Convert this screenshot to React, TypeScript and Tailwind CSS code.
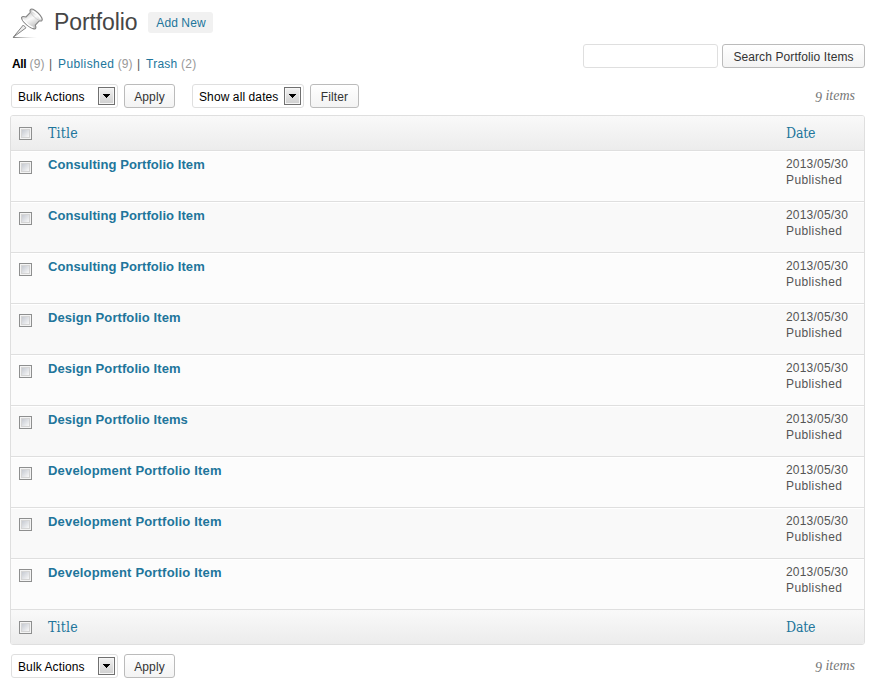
import React from "react";

const items = [
  "Consulting Portfolio Item",
  "Consulting Portfolio Item",
  "Consulting Portfolio Item",
  "Design Portfolio Item",
  "Design Portfolio Item",
  "Design Portfolio Items",
  "Development Portfolio Item",
  "Development Portfolio Item",
  "Development Portfolio Item",
];

function PinIcon() {
  return (
    <svg className="mt-[7px] ml-3 h-8 w-8 shrink-0" viewBox="0 0 32 32" fill="none">
      <defs>
        <linearGradient id="pin" x1="14" y1="7" x2="21" y2="21" gradientUnits="userSpaceOnUse">
          <stop stopColor="#d0d0d0" />
          <stop offset=".4" stopColor="#fafafa" />
          <stop offset="1" stopColor="#c2c2c2" />
        </linearGradient>
        <linearGradient id="shade" x1="1" y1="0" x2="25" y2="0" gradientUnits="userSpaceOnUse">
          <stop stopColor="#777" />
          <stop offset="1" stopColor="#ccc" stopOpacity="0" />
        </linearGradient>
      </defs>
      <path d="M1 30h24v1H1z" fill="url(#shade)" />
      <path d="M11.300 18 1.300 30.200 14 20.800z" fill="#ececec" stroke="#858585" strokeWidth="1" />
      <path
        d="M18.400 5.300C17.200 3 18.600 1.300 21 2.300c3 1.400 7.400 5.600 8.900 8.700 1 2.200-.2 3.600-2.400 2.700l-4.200 4.500c1.200 2.500.6 4.200-1.500 3.700-4.100-1-10.800-6.500-12.100-10-.8-2.200 1-3 4.200-1.900z"
        fill="url(#pin)"
        stroke="#858585"
        strokeWidth="1.100"
        strokeLinejoin="round"
      />
      <path d="M18.700 5.500c1.700 3.200 5.200 6.500 8.600 8" stroke="#c5c5c5" strokeWidth=".8" />
      <path d="M11 12.300c2.200 3.100 6.300 6.500 10.400 8.300M20.400 3.800c3.200 1.500 6.700 4.900 8.100 7.900" stroke="#fff" strokeWidth="1.300" />
    </svg>
  );
}

function Checkbox() {
  return (
    <span className="block h-[13px] w-[13px] border border-[#8e8f8f] bg-[#f4f4f4] p-px">
      <span className="block h-[9px] w-[9px] border border-[#d5d5d5] bg-linear-to-br from-[#c6cad2] to-[#f8f8f8]" />
    </span>
  );
}

function Select({ label, className }: { label: string; className: string }) {
  return (
    <div className={`flex h-6 items-center justify-between rounded-[3px] border border-[#dfdfdf] bg-white pr-[2px] pl-[6px] text-black ${className}`}>
      <span className="pt-[2px] whitespace-nowrap">{label}</span>
      <span className="flex h-[18px] w-[17px] items-center justify-center border border-[#707070] bg-linear-to-b from-[#f2f2f2] to-[#cfcfcf] shadow-[inset_0_0_0_1px_#f6f6f6]">
        <svg className="h-1 w-[7px]" viewBox="0 0 7 4" shapeRendering="crispEdges">
          <path d="M0 0h7v1H6v1H5v1H4v1H3V3H2V2H1V1H0z" fill="#000" />
        </svg>
      </span>
    </div>
  );
}

function Button({ label, className }: { label: string; className: string }) {
  return (
    <button className={`flex h-6 items-center justify-center rounded-[3px] border border-[#bbb] bg-linear-to-b from-white to-[#f3f3f3] pt-[2px] whitespace-nowrap ${className}`}>
      {label}
    </button>
  );
}

function Count() {
  return (
    <span className="pr-[10px] font-['Liberation_Serif',serif] text-[14px] tracking-normal text-[#777] italic">
      <span className="relative top-[2px]">9</span> items
    </span>
  );
}

function HeadRow({ className }: { className: string }) {
  return (
    <div className={`flex items-center bg-linear-to-b from-[#f9f9f9] to-[#ececec] pl-2 font-['DejaVu_Serif_Condensed','DejaVu_Serif',serif] text-[14px] tracking-[0.2px] text-[#21759b] [font-stretch:condensed] ${className}`}>
      <Checkbox />
      <span className="ml-4 flex-1">Title</span>
      <span className="w-[78px] tracking-[-0.2px]">Date</span>
    </div>
  );
}

export default function App() {
  return (
    <main className="h-[684px] w-[873px] overflow-hidden bg-white font-['Liberation_Sans',Arial,sans-serif] text-[12px] leading-4 tracking-[0.1px] text-[#333]">
      <header className="flex h-11">
        <PinIcon />
        <h1 className="mt-2 ml-[10px] text-[23px] leading-[29px] tracking-[-0.1px] text-[#464646]">Portfolio</h1>
        <a className="mt-3 ml-[11px] flex h-[21px] w-[65px] items-center justify-center rounded-[3px] bg-[#f1f1f1] text-[#21759b]">Add New</a>
      </header>
      <div className="flex h-10 pr-2 pl-3">
        <nav className="mt-3 flex h-4 whitespace-nowrap text-[#21759b]">
          <span className="w-[37px]">
            <b className="tracking-[-0.4px] text-black">All</b> <span className="text-[#999]">(9)</span>
          </span>
          <span className="w-[9px] text-[#555]">|</span>
          <span className="w-[79px]">
            <span className="tracking-[0.4px]">Published</span>
            <span className="text-[#999]"> (9)</span>
          </span>
          <span className="w-[9px] text-[#555]">|</span>
          <span className="tracking-[0.25px]">
            Trash <span className="text-[#999]">(2)</span>
          </span>
        </nav>
        <div className="ml-auto flex gap-1">
          <input className="h-6 w-[135px] rounded-[3px] border border-[#dfdfdf] bg-white" />
          <Button label="Search Portfolio Items" className="w-[143px]" />
        </div>
      </div>
      <div className="flex h-[31px] pr-2 pl-[11px]">
        <Select label="Bulk Actions" className="w-[107px]" />
        <Button label="Apply" className="ml-[6px] w-[51px]" />
        <Select label="Show all dates" className="ml-[17px] w-[112px]" />
        <Button label="Filter" className="ml-[6px] w-[49px]" />
        <div className="mt-1 ml-auto">
          <Count />
        </div>
      </div>
      <section className="ml-[10px] h-[530px] w-[855px] overflow-hidden rounded-[3px] border border-[#dfdfdf]">
        <HeadRow className="h-[35px] border-b border-[#dfdfdf]" />
        {items.map((title, i) => (
          <div key={i} className={`flex h-[51px] border-b border-[#dfdfdf] pl-2 shadow-[inset_0_1px_0_#fff] ${i % 2 ? "bg-[#f9f9f9]" : "bg-[#fcfcfc]"}`}>
            <div className="mt-[10px]">
              <Checkbox />
            </div>
            <a className={`mt-[6px] ml-4 flex-1 text-[13px] font-bold text-[#21759b] ${i > 5 ? "tracking-[0.18px]" : i > 2 ? "tracking-[0.09px]" : "tracking-[0.06px]"}`}>{title}</a>
            <div className="mt-[5px] w-[78px] text-[#555]">
              <div className="tracking-[0.2px]">2013/05/30</div>
              <div className="tracking-[0.4px]">Published</div>
            </div>
          </div>
        ))}
        <HeadRow className="h-[34px]" />
      </section>
      <div className="mt-[9px] flex pr-2 pl-[11px]">
        <Select label="Bulk Actions" className="w-[107px]" />
        <Button label="Apply" className="ml-[6px] w-[51px]" />
        <div className="mt-1 ml-auto">
          <Count />
        </div>
      </div>
    </main>
  );
}
